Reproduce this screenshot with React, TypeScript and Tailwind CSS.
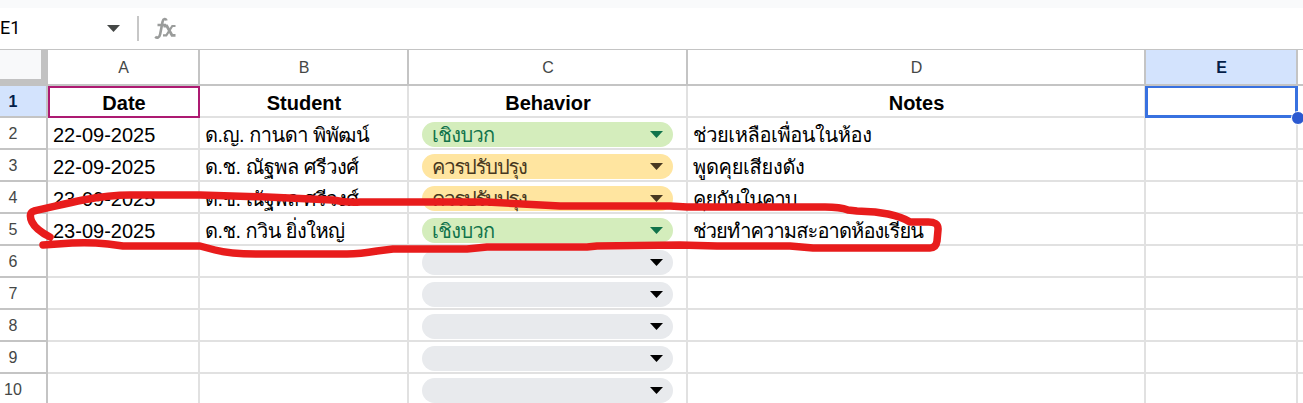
const columns = ["A", "B", "C", "D", "E", ""];

type Tone = "good" | "warn" | "empty";

interface Row {
  n: number;
  date?: string;
  student?: string;
  studentSpacing?: string;
  tone: Tone;
  note?: string;
  noteSpacing?: string;
}

const rows: Row[] = [
  { n: 2, date: "22-09-2025", student: "ด.ญ. กานดา พิพัฒน์", studentSpacing: "tracking-[-0.5px]", tone: "good", note: "ช่วยเหลือเพื่อนในห้อง", noteSpacing: "tracking-[-0.4px]" },
  { n: 3, date: "22-09-2025", student: "ด.ช. ณัฐพล ศรีวงศ์", studentSpacing: "tracking-[-0.5px]", tone: "warn", note: "พูดคุยเสียงดัง", noteSpacing: "tracking-[-0.3px]" },
  { n: 4, date: "23-09-2025", student: "ด.ช. ณัฐพล ศรีวงศ์", studentSpacing: "tracking-[-0.5px]", tone: "warn", note: "คุยกันในคาบ", noteSpacing: "tracking-[-0.9px]" },
  { n: 5, date: "23-09-2025", student: "ด.ช. กวิน ยิ่งใหญ่", studentSpacing: "tracking-[-0.55px]", tone: "good", note: "ช่วยทำความสะอาดห้องเรียน", noteSpacing: "tracking-[-0.85px]" },
  { n: 6, tone: "empty" },
  { n: 7, tone: "empty" },
  { n: 8, tone: "empty" },
  { n: 9, tone: "empty" },
  { n: 10, tone: "empty" },
];

const chips: Record<Tone, { label: string; style: string }> = {
  good: { label: "เชิงบวก", style: "bg-[#d4edbc] text-[#11734b] tracking-[-0.6px]" },
  warn: { label: "ควรปรับปรุง", style: "bg-[#ffe5a0] text-[#473821] tracking-[-1.1px]" },
  empty: { label: "", style: "bg-[#e8eaed] text-black" },
};

const grid = "grid w-[1350px] grid-cols-[48px_152px_209px_279px_458px_152px_52px]";
const cell = "flex min-w-0 items-center whitespace-nowrap border-r-2 border-b-2 border-[#e1e1e1]";
const title = `${cell} justify-center pt-[3px] pl-px text-[20px] font-bold`;

function Caret() {
  return (
    <svg width="13" height="7" viewBox="0 0 13 7" fill="currentColor">
      <path d="M0 0h13L6.500 7z" />
    </svg>
  );
}

function Chip({ tone }: { tone: Tone }) {
  const { label, style } = chips[tone];
  return (
    <div className={`flex h-[25px] w-[251px] items-center justify-between rounded-full pr-[10px] pl-[10px] ${style}`}>
      <span className="pt-px leading-[24px]">{label}</span>
      <Caret />
    </div>
  );
}

function RowNumber({ n, active = false }: { n: number; active?: boolean }) {
  return (
    <div
      className={`flex items-center border-r-2 border-b-2 border-[#c4c4c4] pt-[2px] text-[16px] ${
        active ? "bg-[#d3e3fd] font-bold text-[#041e49]" : "text-[#444746]"
      }`}
    >
      <span className="w-[26px] text-center">{n}</span>
    </div>
  );
}

export default function App() {
  return (
    <div className="relative h-[403px] w-[1303px] overflow-hidden bg-white font-['Liberation_Sans','Loma','Waree','Garuda',sans-serif] text-[20px] leading-none text-black">
      <div className="h-2 bg-[#f9fafb]" />
      <div className="flex h-[42px] items-center border-b border-[#c4c4c4]">
        <span className="w-[107px] pb-[2px] font-['Roboto',sans-serif] text-[18px]">E1</span>
        <span className="text-[#444746]"><Caret /></span>
        <span className="ml-[17px] h-[25px] w-[2px] bg-[#c7c7c7]" />
        <svg className="ml-[15px] text-[#9a9c9b]" width="23" height="23" viewBox="0 0 23 23" fill="none" stroke="currentColor">
          <path d="M12.500 3.500C12 1.300 9.300 1.300 8.600 4.500L6.200 17c-.7 4-3.300 4.300-5 2.700M3.500 8h8.500" strokeWidth="2.600" />
          <path d="M9.500 9h3.300l5.200 9.300h3.500" strokeWidth="2.800" />
          <path d="M21.500 9h-3.200l-6 9.300H9" strokeWidth="2.200" />
        </svg>
      </div>

      <div className={`${grid} h-9`}>
        <div className="border-r-[7px] border-b-[7px] border-[#c2c2c2] bg-[#f8f9fa]" />
        {columns.map((c) => (
          <div
            key={c}
            className={`flex items-center justify-center border-r-2 border-b-2 border-[#c4c4c4] pt-[2px] pl-px text-[16px] ${
              c === "E" ? "bg-[#d3e3fd] font-bold text-[#041e49]" : "text-[#444746]"
            }`}
          >
            {c}
          </div>
        ))}
      </div>

      <div className={`${grid} h-8`}>
        <RowNumber n={1} active />
        <div className="flex items-center justify-center border-2 border-[#ad1a72] pt-[2px] font-bold">Date</div>
        <div className={title}>Student</div>
        <div className={title}>Behavior</div>
        <div className={title}>Notes</div>
        <div className="relative">
          <div className="absolute inset-y-0 right-0 -left-px border-[3px] border-t-2 border-[#3871e0]" />
          <div className="absolute -right-[7px] -bottom-[7px] z-10 size-[14px] rounded-full border border-white bg-[#2b59d0]" />
        </div>
        <div className={cell} />
      </div>

      {rows.map((r) => (
        <div key={r.n} className={`${grid} h-8`}>
          <RowNumber n={r.n} />
          <div className={`${cell} pt-[3px] pl-[5px]`}>{r.date}</div>
          <div className={`${cell} pt-[3px] pl-[5px]`}><span className={r.studentSpacing}>{r.student}</span></div>
          <div className={`${cell} justify-center pt-[3px]`}><Chip tone={r.tone} /></div>
          <div className={`${cell} pt-[3px] pl-[5px]`}><span className={r.noteSpacing}>{r.note}</span></div>
          <div className={cell} />
          <div className={cell} />
        </div>
      ))}

      <svg
        className="pointer-events-none absolute inset-0 z-20"
        width="1303"
        height="403"
        fill="none"
        stroke="#e81c1c"
        strokeWidth="7.500"
        strokeLinecap="round"
        strokeLinejoin="round"
      >
        <path d="M50 237C42 233 35 228 32 222Q28 213 34 211C48 208 68 203 83 200Q110 195 130 195H200L267 197L333 200Q348 203 360 202H487L560 206H670L687 207H825Q840 207 848 210L857 211L875 212L888 214Q902 217 910 222H926Q939 221 938 230L937 241Q936 248 930 248H813L790 246H717L680 245L597 246L587 247H487L467 249H393L377 251Q360 254 347 254H260Q230 254 215 250L200 246H123L108 244Q90 242 72 243L43 245" />
      </svg>
    </div>
  );
}
